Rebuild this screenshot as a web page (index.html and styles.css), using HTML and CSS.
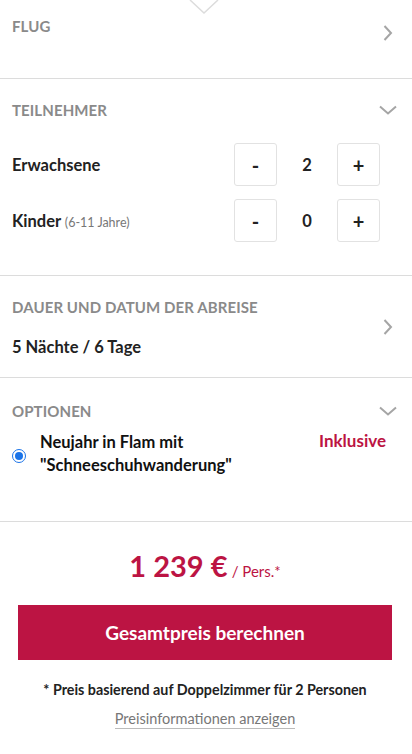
FILE: index.html
```html
<!DOCTYPE html>
<html lang="de">
<head>
<meta charset="utf-8">
<link rel="stylesheet" href="styles.css">
</head>
<body>
<div class="page">
  <svg class="notch" width="32" height="16" viewBox="0 0 32 16"><polyline points="1,0 15,13 29,0" fill="#fff" stroke="#dcdcdc" stroke-width="1.5"/></svg>

  <section class="sec sec-flug">
    <div class="head">
      <h2 class="title">FLUG</h2>
      <svg class="chev-r" width="10" height="16" viewBox="0 0 10 16"><polyline points="1.5,1 8,8 1.5,15" fill="none" stroke="#a5a5a5" stroke-width="2"/></svg>
    </div>
  </section>

  <section class="sec sec-teil">
    <div class="head">
      <h2 class="title">TEILNEHMER</h2>
      <svg class="chev-d" width="18" height="10" viewBox="0 0 18 10"><polyline points="1,1.5 9,8.5 17,1.5" fill="none" stroke="#a5a5a5" stroke-width="2"/></svg>
    </div>
    <div class="rows">
      <div class="row">
        <div class="label">Erwachsene</div>
        <div class="counter">
          <button class="cbtn">-</button>
          <span class="val">2</span>
          <button class="cbtn">+</button>
        </div>
      </div>
      <div class="row">
        <div class="label">Kinder <span class="sub">(6-11 Jahre)</span></div>
        <div class="counter">
          <button class="cbtn">-</button>
          <span class="val">0</span>
          <button class="cbtn">+</button>
        </div>
      </div>
    </div>
  </section>

  <section class="sec sec-dauer">
    <div class="dauer">
      <div>
        <h2 class="title">DAUER UND DATUM DER ABREISE</h2>
        <div class="value">5 Nächte / 6 Tage</div>
      </div>
      <svg class="chev-r" width="10" height="16" viewBox="0 0 10 16"><polyline points="1.5,1 8,8 1.5,15" fill="none" stroke="#a5a5a5" stroke-width="2"/></svg>
    </div>
  </section>

  <section class="sec sec-opt">
    <div class="head">
      <h2 class="title">OPTIONEN</h2>
      <svg class="chev-d" width="18" height="10" viewBox="0 0 18 10"><polyline points="1,1.5 9,8.5 17,1.5" fill="none" stroke="#a5a5a5" stroke-width="2"/></svg>
    </div>
    <div class="option">
      <span class="radio"><span class="dot"></span></span>
      <div class="opt-name">Neujahr in Flam mit "Schneeschuhwanderung"</div>
      <div class="incl">Inklusive</div>
    </div>
  </section>

  <div class="price-area">
    <div class="price"><span class="amount">1 239 €</span> <span class="per">/ Pers.*</span></div>
    <button class="cta">Gesamtpreis berechnen</button>
    <p class="note">* Preis basierend auf Doppelzimmer für 2 Personen</p>
    <a class="info">Preisinformationen anzeigen</a>
  </div>
</div>
</body>
</html>
```
FILE: styles.css
```css
* { box-sizing: border-box; }
html, body { margin: 0; padding: 0; background: #fff; }
body { font-family: "Lato", "Noto Sans", sans-serif; color: #222; }
.page { position: relative; width: 412px; }
.notch { position: absolute; left: 189px; top: 0; }
.sec { border-bottom: 1px solid #dcdcdc; padding: 0 12px; }
.title { margin: 0; font-size: 15px; line-height: 18px; font-weight: 700; color: #8a8a8a; letter-spacing: 0.1px; }
.head { display: flex; justify-content: space-between; align-items: flex-start; }
.sec-flug { height: 79px; padding-top: 17px; }
.sec-flug .chev-r { margin-top: 8px; margin-right: 7px; }
.chev-d { margin-top: 4px; margin-right: 3px; }
.sec-teil { padding-top: 22px; height: 197px; }
.rows { display: flex; flex-direction: column; gap: 13px; margin-top: 24px; }
.row { display: flex; justify-content: space-between; align-items: center; }
.label { font-size: 16.5px; font-weight: 700; color: #222; }
.sub { font-size: 12.5px; font-weight: 400; color: #777; }
.counter { display: flex; align-items: center; margin-right: 20px; }
.cbtn { width: 43px; height: 43px; border: 1px solid #e2e2e2; border-radius: 3px; background: #fff; font-family: inherit; font-size: 20px; font-weight: 700; color: #222; padding: 0; }
.val { width: 60px; text-align: center; font-size: 16.5px; font-weight: 700; }
.sec-dauer { height: 102px; padding-top: 22px; }
.dauer { display: flex; justify-content: space-between; align-items: center; }
.dauer .chev-r { margin-right: 7px; margin-top: -2px; }
.value { margin-top: 21px; font-size: 16.5px; font-weight: 700; }
.sec-opt { height: 144px; padding-top: 24px; }
.option { display: flex; align-items: flex-start; margin-top: 11px; }
.radio { width: 14px; height: 14px; border: 1px solid #1a73e8; border-radius: 50%; display: flex; align-items: center; justify-content: center; margin-top: 18px; flex: none; }
.dot { width: 8px; height: 8px; border-radius: 50%; background: #1a73e8; }
.opt-name { margin-left: 14px; width: 230px; font-size: 16.5px; line-height: 23px; font-weight: 700; color: #111; }
.incl { margin-left: auto; margin-right: 14px; margin-top: -2px; font-size: 17px; font-weight: 700; color: #bc1443; line-height: 23px; }
.price-area { display: flex; flex-direction: column; align-items: center; padding: 26px 20px 0 18px; }
.price { color: #bc1443; }
.amount { font-size: 29px; font-weight: 700; }
.per { font-size: 15px; }
.cta { margin-top: 22px; width: 100%; height: 55px; border: none; background: #bc1443; color: #fff; font-family: inherit; font-size: 19px; font-weight: 700; }
.note { margin: 21px 0 0; font-size: 14.3px; font-weight: 700; color: #222; }
.info { margin-top: 12px; font-size: 14.5px; color: #777; border-bottom: 1px solid #bbb; padding-bottom: 1px; }
```
